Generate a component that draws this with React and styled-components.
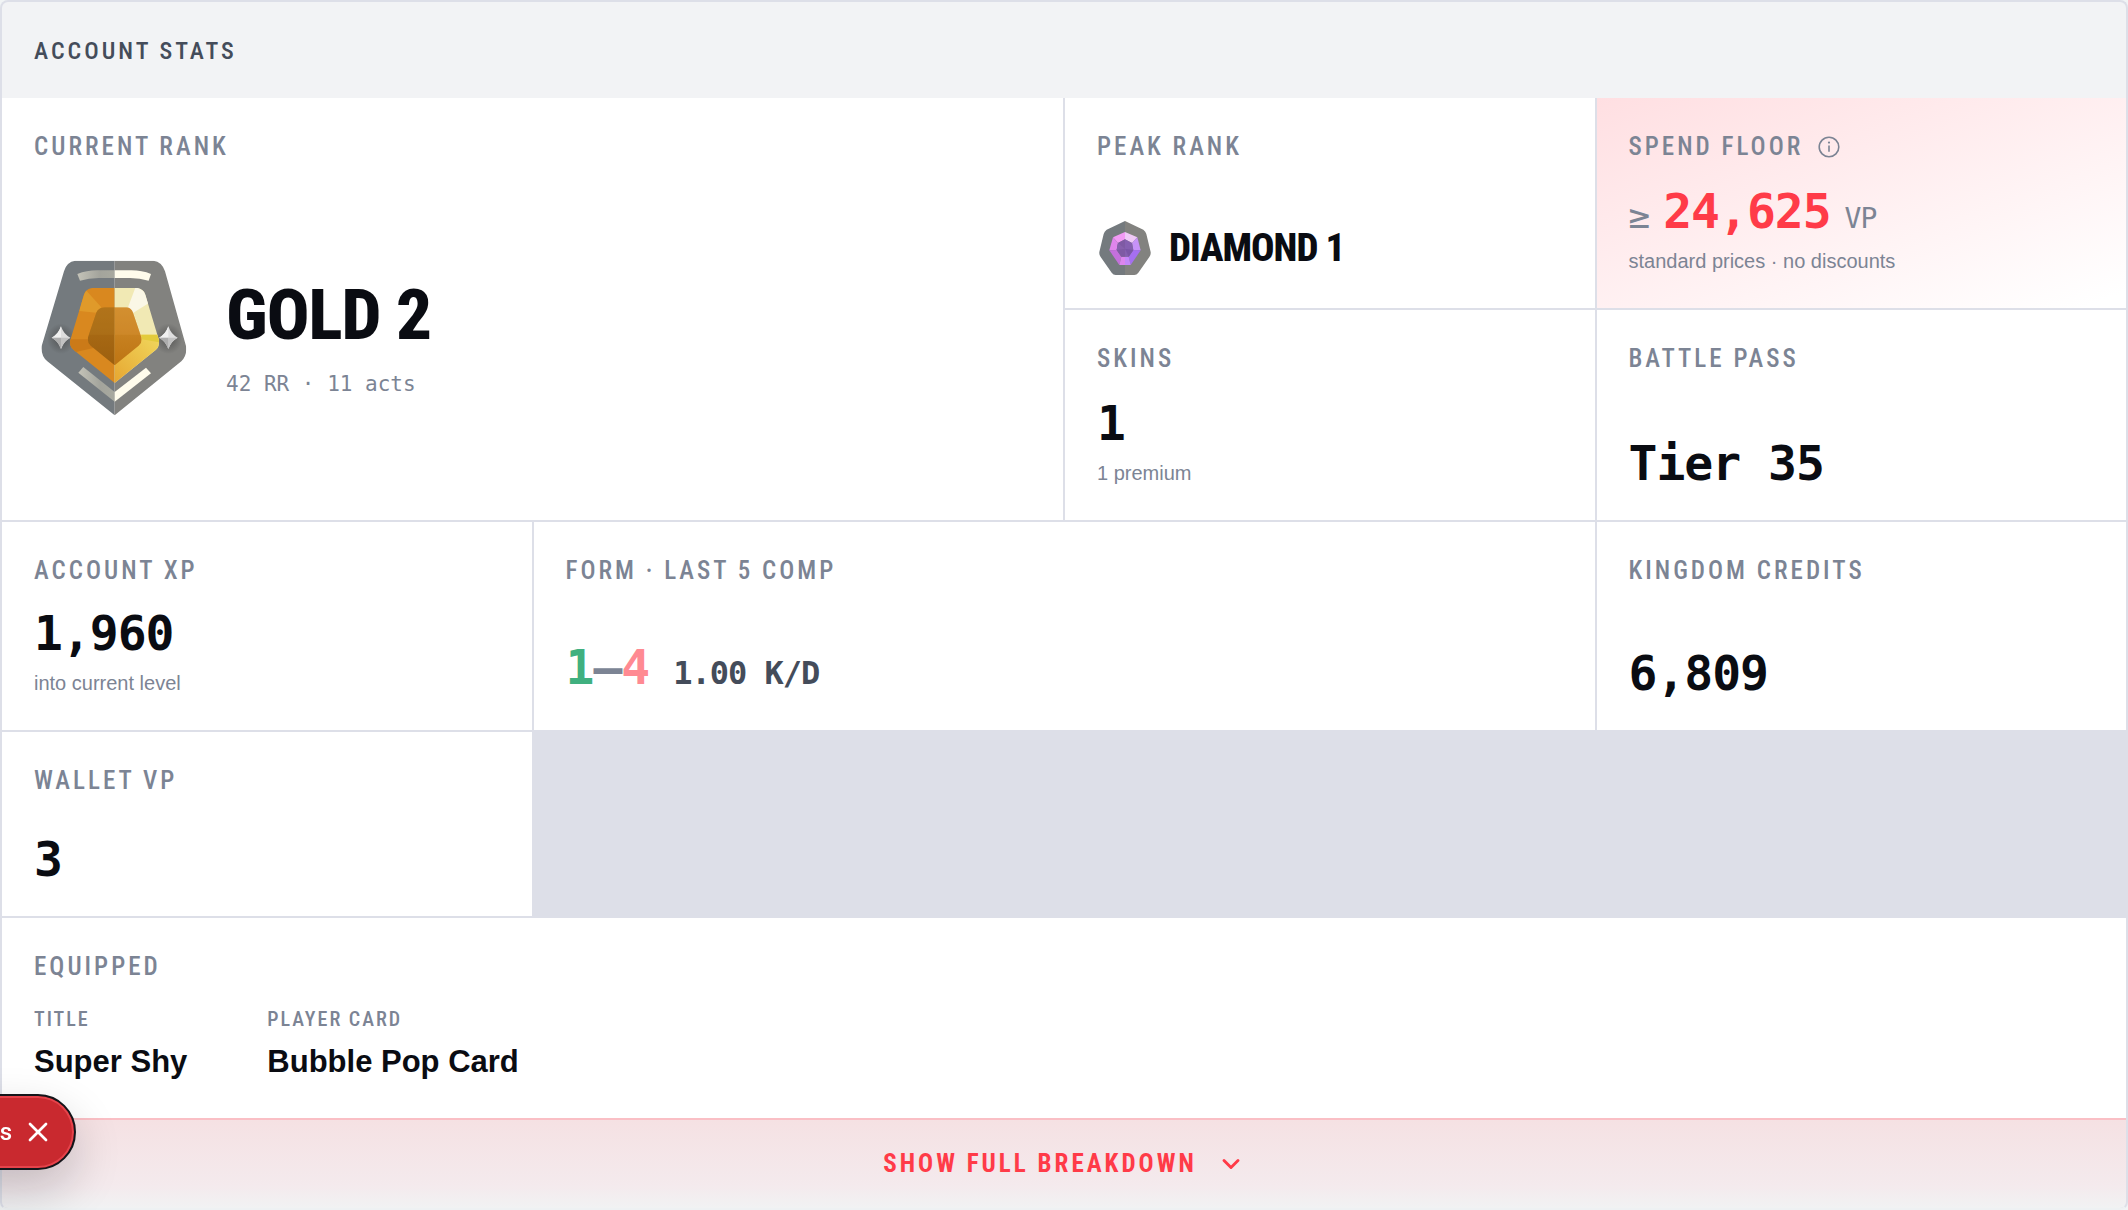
import React from "react";
import styled, { createGlobalStyle } from "styled-components";
import { ChevronDown, X } from "lucide-react";

const condensed = `"Roboto Condensed", Roboto, "Liberation Sans", sans-serif`;
const mono = `"DejaVu Sans Mono", "Liberation Mono", monospace`;
const body = `"Liberation Sans", sans-serif`;

const GlobalStyle = createGlobalStyle`
  *, *::before, *::after {
    box-sizing: border-box;
  }
  body {
    margin: 0;
    background: #f1f4f5;
    color: #0a0c12;
    font-family: ${body};
    overflow-x: hidden;
  }
  h2, h3, p, dl, dt, dd {
    margin: 0;
  }
`;

const Card = styled.section`
  border: 2px solid #dddfe8;
  border-bottom-color: #eef1f3;
  border-radius: 8px;
  overflow: hidden;
  background: #dddfe8;
`;

const CardHeader = styled.header`
  padding: 32px 32px 30px;
  background: #f2f3f5;
`;

const Label = styled.h3`
  display: flex;
  align-items: center;
  gap: 14px;
  font-family: ${condensed};
  font-size: 25px;
  font-weight: 500;
  line-height: 34px;
  letter-spacing: 3px;
  text-transform: uppercase;
  white-space: nowrap;
  color: #7c8494;
`;

const CardTitle = styled(Label).attrs({ as: "h2" })`
  font-size: 24px;
  color: #444c5a;
`;

const StatsGrid = styled.div`
  display: grid;
  grid-template-columns: repeat(4, minmax(0, 1fr));
  grid-template-rows:
    minmax(210px, auto) minmax(210px, auto) minmax(208px, auto)
    minmax(184px, auto) minmax(200px, auto);
  gap: 2px;
`;

const Cell = styled.div`
  grid-column: span ${(p) => p.$cols || 1};
  grid-row: span ${(p) => p.$rows || 1};
  display: flex;
  flex-direction: column;
  gap: 16px;
  padding: 32px;
  background: ${(p) =>
    p.$accent ? "linear-gradient(160deg, #ffdfe2 0%, #ffffff 96%)" : "#ffffff"};
`;

const Stat = styled.div`
  display: flex;
  flex-direction: column;
  gap: 10px;
  margin-top: auto;
`;

const Value = styled.p`
  display: flex;
  align-items: baseline;
  gap: 14px;
  font-family: ${mono};
  font-size: 48px;
  font-weight: 700;
  line-height: 50px;
  letter-spacing: -1px;
  white-space: nowrap;
`;

const FormValue = styled(Value)`
  gap: 24px;
  padding-bottom: 6px;
`;

const Accent = styled.span`
  color: ${(p) => p.color};
`;

const Unit = styled.span`
  font-size: ${(p) => p.$size || 28}px;
  font-weight: 400;
  line-height: 1;
  color: #7c8494;
`;

const Ratio = styled.span`
  font-size: 32px;
  line-height: 1;
  color: #444c5a;
`;

const Note = styled.p`
  font-size: 20px;
  line-height: 30px;
  color: #7c8494;
`;

const RankRow = styled.div`
  display: flex;
  flex: 1;
  align-items: center;
  gap: 32px;
  padding-top: 8px;
`;

const RankText = styled.div`
  display: flex;
  flex-direction: column;
  gap: 16px;
`;

const RankName = styled.p`
  font-family: ${condensed};
  font-size: 71px;
  font-weight: 800;
  line-height: 76px;
  letter-spacing: -1px;
  text-transform: uppercase;
`;

const RankNote = styled.p`
  font-family: ${mono};
  font-size: 21px;
  line-height: 30px;
  color: #7c8494;
`;

const PeakRow = styled.div`
  display: flex;
  align-items: center;
  gap: 16px;
  margin-top: auto;
`;

const PeakName = styled(RankName)`
  font-size: 39px;
  line-height: 56px;
`;

const InfoButton = styled.button`
  display: flex;
  padding: 0;
  border: 0;
  background: none;
  color: inherit;
`;

const Equipped = styled.dl`
  display: flex;
  gap: 80px;
  padding-top: 4px;
`;

const EquippedItem = styled.div`
  display: flex;
  flex-direction: column;
  gap: 8px;

  dt {
    font-family: ${condensed};
    font-size: 20px;
    font-weight: 500;
    line-height: 30px;
    letter-spacing: 2px;
    text-transform: uppercase;
    color: #7c8494;
  }
  dd {
    font-size: 31px;
    font-weight: 700;
    line-height: 40px;
  }
`;

const BreakdownButton = styled.button`
  display: flex;
  align-items: center;
  justify-content: center;
  gap: 20px;
  width: 100%;
  padding: 26px 32px;
  border: 0;
  border-top: 2px solid #fabfc5;
  background: linear-gradient(#f5e1e3 0%, #f4eaed 75%, #f1f2f3 100%);
  color: #ff3b48;
  font-family: ${condensed};
  font-size: 25px;
  font-weight: 700;
  line-height: 36px;
  letter-spacing: 3px;
  text-transform: uppercase;
`;

const Toast = styled.div`
  position: fixed;
  left: -144px;
  bottom: 40px;
  display: flex;
  align-items: center;
  justify-content: flex-end;
  gap: 10px;
  width: 220px;
  height: 76px;
  padding-right: 20px;
  border: 2px solid #14151a;
  border-radius: 38px;
  background: #c9292f;
  box-shadow:
    inset 0 0 0 2px #e6434b,
    0 20px 48px rgba(10, 12, 18, 0.2);
  color: #ffffff;
  font-family: Roboto, ${body};
  font-size: 24px;
  font-weight: 500;
`;

const CloseButton = styled.button`
  display: flex;
  padding: 0;
  border: 0;
  background: none;
  color: inherit;
`;

const InfoIcon = () => (
  <svg width="24" height="24" viewBox="0 0 24 24" fill="none" aria-hidden="true">
    <circle cx="12" cy="12" r="9.8" stroke="currentColor" strokeWidth="1.6" />
    <path d="M12 10.6v6.2" stroke="currentColor" strokeWidth="1.6" />
    <circle cx="12" cy="7.6" r="1.1" fill="currentColor" />
  </svg>
);

const goldOuter =
  "M118 14H352Q378 17 387 46L450 270Q454 298 436 316L236 478L34 316Q14 298 17 270L84 46Q92 17 118 14Z";
const goldInner =
  "M168 96H304Q322 98 328 116L368 250Q372 272 358 283L236 381L114 283Q99 270 103 252L144 116Q150 98 168 96Z";
const goldCore =
  "M206 154H272Q286 156 291 170L316 244Q320 260 308 269L236 328L164 269Q153 259 156 244L181 170Q188 155 206 154Z";

const GoldBadge = () => (
  <svg width="160" height="160" viewBox="-6 6 480 480" role="img" aria-label="Gold rank badge">
    <defs>
      <clipPath id="gold-outer">
        <path d={goldOuter} />
      </clipPath>
      <clipPath id="gold-inner">
        <path d={goldInner} />
      </clipPath>
      <clipPath id="gold-core">
        <path d={goldCore} />
      </clipPath>
      <linearGradient id="bar-left">
        <stop offset="0" stopColor="#c4c3b8" />
        <stop offset="0.6" stopColor="#a3a49c" />
        <stop offset="1" stopColor="#a8a99f" />
      </linearGradient>
      <linearGradient id="gold-low" x1="0" y1="1" x2="1" y2="0">
        <stop offset="0" stopColor="#e6a42f" />
        <stop offset="1" stopColor="#f1dc62" />
      </linearGradient>
      <linearGradient id="core-left" x1="0" y1="0" x2="0" y2="1">
        <stop offset="0" stopColor="#b07018" />
        <stop offset="1" stopColor="#9c5f0e" />
      </linearGradient>
      <linearGradient id="core-right" x1="0" y1="0" x2="0" y2="1">
        <stop offset="0" stopColor="#d08d2c" />
        <stop offset="1" stopColor="#bd7413" />
      </linearGradient>
      <radialGradient id="star-shade">
        <stop offset="0" stopColor="#3c3c3c" stopOpacity="0.65" />
        <stop offset="1" stopColor="#3c3c3c" stopOpacity="0" />
      </radialGradient>
    </defs>
    <g clipPath="url(#gold-outer)">
      <path d="M0 0H236V480H0Z" fill="#747a7e" />
      <path d="M236 0H480V480H236Z" fill="#82827f" />
      <ellipse cx="75" cy="248" rx="42" ry="46" fill="url(#star-shade)" />
      <ellipse cx="397" cy="248" rx="42" ry="46" fill="url(#star-shade)" />
    </g>
    <path d="M124 54Q152 43 184 43H236V66H188Q158 67 132 74Z" fill="url(#bar-left)" />
    <path d="M345 54Q318 43 286 43H236V66H282Q312 67 338 74Z" fill="#fffcec" />
    <path d="M142 333L236 408V437L127 350Z" fill="url(#bar-left)" />
    <path d="M330 335L236 408V437L345 352Z" fill="#fffcec" />
    <g clipPath="url(#gold-inner)">
      <path d="M90 90H236V390H90Z" fill="#d9881f" />
      <path d="M144 96L196 154L180 170L130 165Z" fill="#e09a2a" />
      <path d="M90 250L158 250L172 276L110 290Z" fill="#cb7a18" />
      <path d="M236 90H390V390H236Z" fill="#f1e9b4" />
      <path d="M300 90L330 110L340 140L292 170L276 154Z" fill="#faf7e6" />
      <path d="M236 236H390V390H236Z" fill="url(#gold-low)" />
      <path d="M316 236H390V262L318 250Z" fill="#e3cb3c" />
    </g>
    <g clipPath="url(#gold-core)">
      <path d="M150 150H236V330H150Z" fill="url(#core-left)" />
      <path d="M236 150H330V330H236Z" fill="url(#core-right)" />
      <path d="M150 150H236V236H150Z" fill="#b47a20" opacity="0.35" />
      <path d="M236 150H330V236H236Z" fill="#d9963a" opacity="0.35" />
    </g>
    {[75, 397].map((x) => (
      <g key={x} transform={`translate(${x} 245)`}>
        <path d="M0-34Q8-10 28 0Q8 10 0 34Q-8 10-28 0Q-8-10 0-34Z" fill="#dedede" />
        <path d="M0-34Q-8-10-28 0H0Z" fill="#f0f0f0" />
        <path d="M0 34Q8 10 28 0H0Z" fill="#c2c2c2" />
        <path d="M0 34Q-8 10-28 0H0Z" fill="#adadad" />
      </g>
    ))}
  </svg>
);

const DiamondBadge = () => (
  <svg width="56" height="56" viewBox="6 12 168 168" role="img" aria-label="Diamond rank badge">
    <path d="M90 15L35 41Q28 46 26 54L13 108Q12 116 17 123L50 170Q55 177 62 177H90Z" fill="#747a7e" />
    <path d="M90 15L145 41Q152 46 154 54L167 108Q168 116 163 123L130 170Q125 177 118 177H90Z" fill="#82827f" />
    <path d="M90 48L54 64L69 81L90 70Z" fill="#f29af5" />
    <path d="M90 48L127 64L111 81L90 70Z" fill="#efc9f7" />
    <path d="M54 64L43 103L65 102L69 81Z" fill="#df85ec" />
    <path d="M127 64L137 103L115 102L111 81Z" fill="#c792f8" />
    <path d="M43 103L73 147L79 122L65 102Z" fill="#c470dc" />
    <path d="M137 103L107 147L101 122L115 102Z" fill="#a56ff0" />
    <path d="M73 147H90V122H79Z" fill="#dc86ee" />
    <path d="M107 147H90V122H101Z" fill="#c488fa" />
    <path d="M90 70L69 81L65 102L79 122H90Z" fill="#7e5aa4" />
    <path d="M90 70L111 81L115 102L101 122H90Z" fill="#8560b0" />
    <path d="M90 98L69 81L65 102Z" fill="#8660ac" />
    <path d="M90 98L115 102L101 122Z" fill="#7a56a6" />
  </svg>
);

const StatCell = ({ label, value, note }) => (
  <Cell>
    <Label>{label}</Label>
    <Stat>
      <Value>{value}</Value>
      {note && <Note>{note}</Note>}
    </Stat>
  </Cell>
);

const App = () => {
  return (
    <>
      <GlobalStyle />
      <Card>
        <CardHeader>
          <CardTitle>Account stats</CardTitle>
        </CardHeader>
        <StatsGrid>
          <Cell $cols={2} $rows={2}>
            <Label>Current rank</Label>
            <RankRow>
              <GoldBadge />
              <RankText>
                <RankName>Gold 2</RankName>
                <RankNote>42 RR · 11 acts</RankNote>
              </RankText>
            </RankRow>
          </Cell>
          <Cell>
            <Label>Peak rank</Label>
            <PeakRow>
              <DiamondBadge />
              <PeakName>Diamond 1</PeakName>
            </PeakRow>
          </Cell>
          <Cell $accent>
            <Label>
              Spend floor
              <InfoButton type="button" aria-label="About spend floor">
                <InfoIcon />
              </InfoButton>
            </Label>
            <Stat>
              <Value>
                <Unit $size={36}>≥</Unit>
                <Accent color="#ff3b48">24,625</Accent>
                <Unit>VP</Unit>
              </Value>
              <Note>standard prices · no discounts</Note>
            </Stat>
          </Cell>
          <StatCell label="Skins" value="1" note="1 premium" />
          <StatCell label="Battle pass" value="Tier 35" />
          <StatCell label="Account XP" value="1,960" note="into current level" />
          <Cell $cols={2}>
            <Label>Form · last 5 comp</Label>
            <Stat>
              <FormValue>
                <span>
                  <Accent color="#40b07f">1</Accent>
                  <Accent color="#7c8494">–</Accent>
                  <Accent color="#ff8a92">4</Accent>
                </span>
                <Ratio>1.00 K/D</Ratio>
              </FormValue>
            </Stat>
          </Cell>
          <StatCell label="Kingdom credits" value="6,809" />
          <StatCell label="Wallet VP" value="3" />
          <Cell $cols={4}>
            <Label>Equipped</Label>
            <Equipped>
              <EquippedItem>
                <dt>Title</dt>
                <dd>Super Shy</dd>
              </EquippedItem>
              <EquippedItem>
                <dt>Player card</dt>
                <dd>Bubble Pop Card</dd>
              </EquippedItem>
            </Equipped>
          </Cell>
        </StatsGrid>
        <BreakdownButton type="button">
          Show full breakdown
          <ChevronDown size={28} strokeWidth={2.5} aria-hidden="true" />
        </BreakdownButton>
      </Card>
      <Toast>
        <span>s</span>
        <CloseButton type="button" aria-label="Close">
          <X size={32} strokeWidth={2} aria-hidden="true" />
        </CloseButton>
      </Toast>
    </>
  );
};

export default App;
